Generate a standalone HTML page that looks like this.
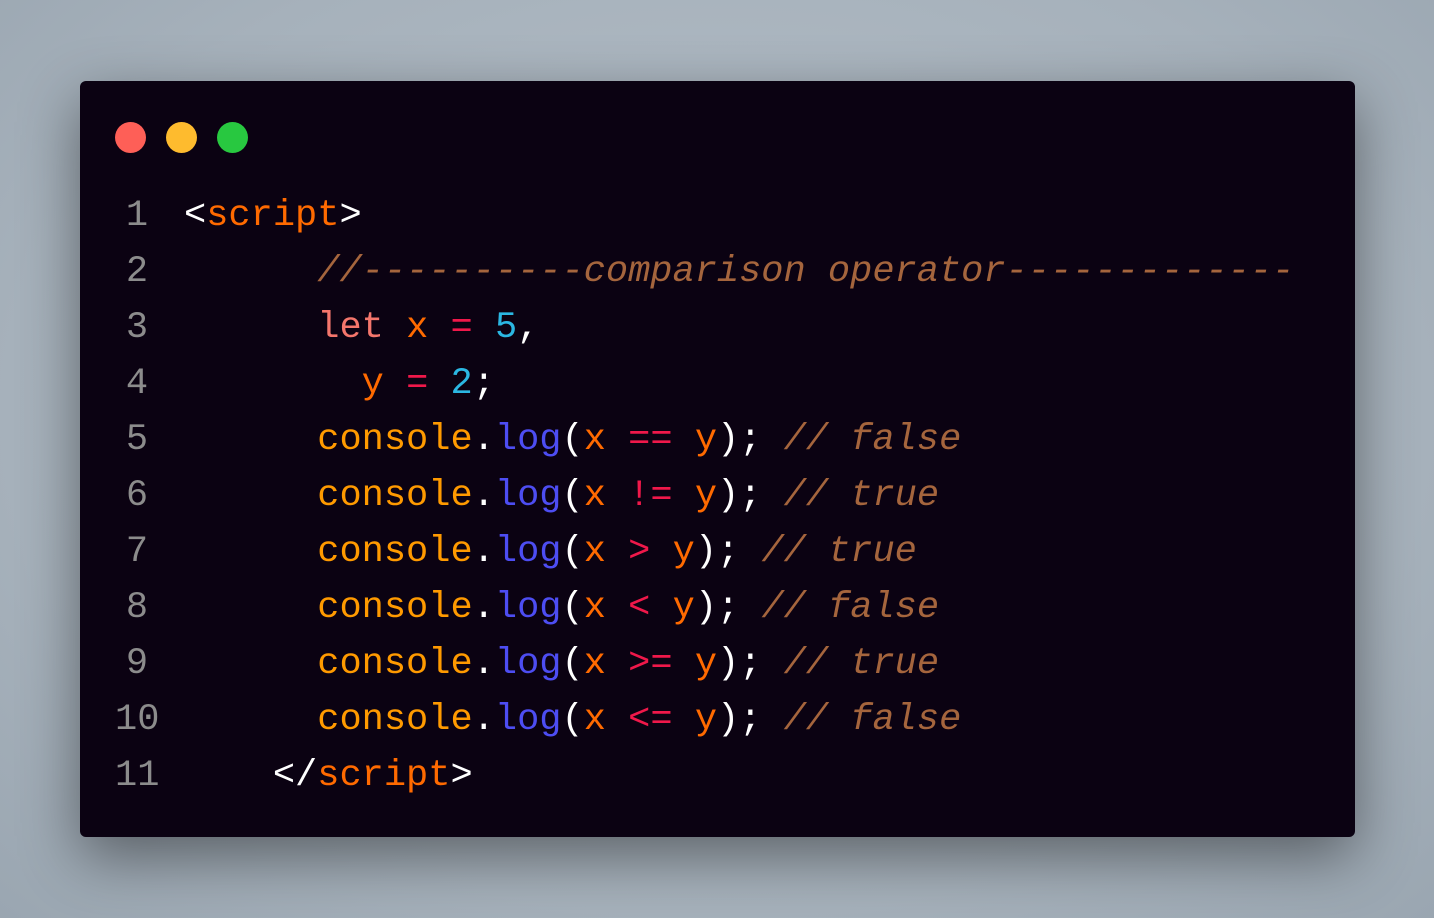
<!DOCTYPE html>
<html><head><style>
html,body{margin:0;padding:0;}
body{width:1434px;height:918px;background:radial-gradient(ellipse at 50% 45%,#b8c2cb 0%,#a6b1bb 70%,#9aa6b1 100%);position:relative;overflow:hidden;}
.win{position:absolute;left:80px;top:81px;width:1275px;height:756px;background:#0b0212;border-radius:6px;box-shadow:0 20px 60px rgba(0,0,0,.45);}
.dot{position:absolute;top:122px;width:31px;height:31px;border-radius:50%;}
.code{position:absolute;left:0;top:188px;font-family:"Liberation Mono",monospace;font-size:37px;line-height:56px;white-space:pre;color:#fff;}
.ln{position:absolute;left:115px;width:44px;text-align:center;color:#8c8c8c;}
.tx{position:absolute;left:184px;}
.o{color:#ff6a00}.c{color:#a5653d;font-style:italic}.k{color:#f4766c}.e{color:#f0184a}.n{color:#2bb7e2}.co{color:#ff9a00}.l{color:#4d4df2}
</style></head><body>
<div class="win"></div>
<div class="dot" style="left:115px;background:#fe5f57"></div>
<div class="dot" style="left:166px;background:#febb2e"></div>
<div class="dot" style="left:217px;background:#28c840"></div>
<div class="code">
<div class="ln" style="top:0">1</div><div class="tx" style="top:0">&lt;<span class="o">script</span>&gt;</div>
<div class="ln" style="top:56px">2</div><div class="tx" style="top:56px">      <span class="c">//----------comparison operator-------------</span></div>
<div class="ln" style="top:112px">3</div><div class="tx" style="top:112px">      <span class="k">let</span> <span class="o">x</span> <span class="e">=</span> <span class="n">5</span>,</div>
<div class="ln" style="top:168px">4</div><div class="tx" style="top:168px">        <span class="o">y</span> <span class="e">=</span> <span class="n">2</span>;</div>
<div class="ln" style="top:224px">5</div><div class="tx" style="top:224px">      <span class="co">console</span>.<span class="l">log</span>(<span class="o">x</span> <span class="e">==</span> <span class="o">y</span>); <span class="c">// false</span></div>
<div class="ln" style="top:280px">6</div><div class="tx" style="top:280px">      <span class="co">console</span>.<span class="l">log</span>(<span class="o">x</span> <span class="e">!=</span> <span class="o">y</span>); <span class="c">// true</span></div>
<div class="ln" style="top:336px">7</div><div class="tx" style="top:336px">      <span class="co">console</span>.<span class="l">log</span>(<span class="o">x</span> <span class="e">&gt;</span> <span class="o">y</span>); <span class="c">// true</span></div>
<div class="ln" style="top:392px">8</div><div class="tx" style="top:392px">      <span class="co">console</span>.<span class="l">log</span>(<span class="o">x</span> <span class="e">&lt;</span> <span class="o">y</span>); <span class="c">// false</span></div>
<div class="ln" style="top:448px">9</div><div class="tx" style="top:448px">      <span class="co">console</span>.<span class="l">log</span>(<span class="o">x</span> <span class="e">&gt;=</span> <span class="o">y</span>); <span class="c">// true</span></div>
<div class="ln" style="top:504px">10</div><div class="tx" style="top:504px">      <span class="co">console</span>.<span class="l">log</span>(<span class="o">x</span> <span class="e">&lt;=</span> <span class="o">y</span>); <span class="c">// false</span></div>
<div class="ln" style="top:560px">11</div><div class="tx" style="top:560px">    &lt;/<span class="o">script</span>&gt;</div>
</div>
</body></html>
